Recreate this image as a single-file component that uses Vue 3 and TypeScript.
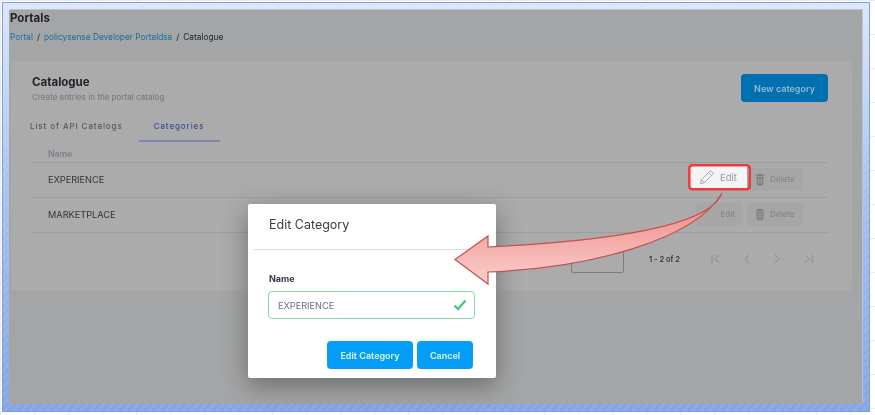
<script setup lang="ts">
interface Row { name: string; highlighted: boolean }
const rows: Row[] = [
  { name: 'EXPERIENCE', highlighted: true },
  { name: 'MARKETPLACE', highlighted: false },
]
</script>

<template>
  <div class="screen">
    <div class="frame">
      <main class="page">
        <h1 class="page-title">Portals</h1>
        <nav class="crumbs">
          <a>Portal</a><span class="sep">/</span><a>policysense Developer Portaldsa</a><span class="sep">/</span><span>Catalogue</span>
        </nav>
        <section class="card">
          <header class="card-head">
            <div>
              <h2>Catalogue</h2>
              <p>Create entries in the portal catalog</p>
            </div>
            <button class="new-btn">New category</button>
          </header>
          <div class="tabs">
            <span class="tab">List of API Catalogs</span>
            <span class="tab active">Categories</span>
          </div>
          <div class="table">
            <div class="th">Name</div>
            <div v-for="row in rows" :key="row.name" class="tr">
              <span class="cell-name">{{ row.name }}</span>
              <div class="actions">
                <button class="act edit" :class="{ hot: row.highlighted }">
                  <svg class="pencil" viewBox="0 0 16 16" fill="none" stroke="currentColor" stroke-width="1">
                    <path d="M1.5 14.5l1-4.2L11.6 1.2a1 1 0 0 1 1.4 0l1.8 1.8a1 1 0 0 1 0 1.4L5.700 13.500z" />
                    <path d="M2.500 10.300l3.200 3.200M10.200 2.600l3.200 3.200" />
                  </svg>
                  Edit
                </button>
                <button class="act del">
                  <svg class="trash" viewBox="0 0 14 16" fill="currentColor">
                    <path d="M5 0h4l.6 1.500H13V3H1V1.500h3.400zM2 4h10l-.7 12H2.700zM4.500 6l.3 8h1L5.500 6zM6.500 6v8h1V6zM8.500 6l-.3 8h1l.3-8z" fill-rule="evenodd" />
                  </svg>
                  Delete
                </button>
              </div>
            </div>
          </div>
          <footer class="pager">
            <div class="size-box"></div>
            <span class="range">1 - 2 of 2</span>
            <div class="pager-icons">
              <svg viewBox="0 0 12 12"><path d="M2 2v8M9 2L5 6l4 4" /></svg>
              <svg viewBox="0 0 12 12"><path d="M8 2L4 6l4 4" /></svg>
              <svg viewBox="0 0 12 12"><path d="M4 2l4 4-4 4" /></svg>
              <svg viewBox="0 0 12 12"><path d="M3 2l4 4-4 4M10 2v8" /></svg>
            </div>
          </footer>
        </section>
      </main>
    </div>

    <div class="modal">
      <div class="modal-head">Edit Category</div>
      <div class="modal-body">
        <label class="field-label">Name</label>
        <div class="input">
          <span>EXPERIENCE</span>
          <svg class="check" viewBox="0 0 14 12" fill="none"><path d="M1.500 6.500l3.500 3.500 7.500-8.500" /></svg>
        </div>
        <div class="modal-actions">
          <button class="primary edit-cat">Edit Category</button>
          <button class="primary cancel">Cancel</button>
        </div>
      </div>
    </div>

    <svg class="annotation" viewBox="0 0 875 415" width="875" height="415">
      <defs>
        <linearGradient id="arrowFill" x1="0" y1="0" x2="0" y2="1">
          <stop offset="0" stop-color="#ef8580" />
          <stop offset="1" stop-color="#f9cfcd" />
        </linearGradient>
      </defs>
      <rect x="689.300" y="165.300" width="60.500" height="24" rx="3" fill="none" stroke="#f03a3a" stroke-width="2.500" />
      <path d="M722 193C712 222 630 240 488 247L488 236L455 259.500L488 284L488 272C590 268 695 240 722 193Z" fill="url(#arrowFill)" stroke="#bd5450" stroke-width="1.200" stroke-linejoin="miter" />
    </svg>
  </div>
</template>

<style>
html, body { margin: 0; padding: 0; background: #fff; }
</style>

<style scoped>
.screen {
  position: relative;
  width: 875px;
  height: 415px;
  overflow: hidden;
  background-color: #fff;
  background-image:
    linear-gradient(#e9ecf1 1px, transparent 1px),
    linear-gradient(90deg, #e9ecf1 1px, transparent 1px);
  background-size: 34px 34px;
  padding: 2px 5px 3px 2px;
  box-sizing: border-box;
  font-family: Inter, "Liberation Sans", sans-serif;
}
.frame {
  height: 100%;
  box-sizing: border-box;
  padding: 7px 7px 7px 6px;
  border: 1px solid #7f9ed6;
  background:
    repeating-linear-gradient(135deg, rgba(255, 255, 255, 0.07) 0 3px, transparent 3px 6px),
    linear-gradient(#dbe7fa, #a9c3f0 45%, #84a5e3);
}
.page {
  height: 100%;
  box-sizing: border-box;
  background: #a4a5a6;
  padding: 1px 10px 0 1px;
  color: #1f2127;
  box-shadow: 1px -1px 0 #bcc3cf;
  filter: blur(0.35px);
}
.page-title { margin: 0; font-size: 11.500px; line-height: 14px; font-weight: 700; }
.crumbs { margin-top: 6px; font-size: 8.300px; line-height: 12px; display: flex; color: #23252b; }
.crumbs a { color: #1d6f9e; }
.sep { margin: 0 4px; }
.card {
  margin-top: 18px;
  margin-left: 1px;
  height: 230px;
  box-sizing: border-box;
  background: #ababab;
  border-radius: 5px;
  padding: 13px 24px 0 20px;
}
.card-head { display: flex; justify-content: space-between; padding-left: 2px; margin-left: -1px; }
.card-head h2 { margin: 1px 0 0; font-size: 11.500px; line-height: 14px; font-weight: 700; color: #21232b; }
.card-head p { margin: 3px 0 0; font-size: 8px; line-height: 10px; font-weight: 500; color: #7a7b82; }
.new-btn {
  width: 87px; height: 28px; border: 0; border-radius: 4px;
  background: #0070b0; color: #8fb9d2;
  font: 600 9px Inter, "Liberation Sans", sans-serif;
}
.tabs { display: flex; margin-top: 12px; height: 28px; margin-left: -1px; }
.tab { font-size: 8px; line-height: 24px; letter-spacing: 0.9px; font-weight: 500; color: #55575c; padding: 0 8px 0 0; }
.tab.active {
  color: #3e4a8f; margin-left: 8px; padding: 0 16px 0 15px;
  border-bottom: 2px solid #7c84b6; height: 26px; box-sizing: content-box;
}
.table { padding-left: 0; margin-top: 6px; }
.th {
  font-size: 8.600px; font-weight: 600; color: #7c7d8e; padding-left: 17px;
  line-height: 12px; padding-bottom: 2px; border-bottom: 1px solid #9d9e9f;
}
.tr {
  display: flex; align-items: center; justify-content: space-between;
  height: 32px; box-sizing: content-box;
  padding: 0 25px 2px 17px; border-bottom: 1px solid #9d9e9f;
}
.cell-name { font-size: 9.200px; font-weight: 400; color: #33343a; }
.actions { display: flex; gap: 5px; width: 107px; justify-content: flex-end; }
.act {
  display: flex; align-items: center; justify-content: center; gap: 5px; flex: none;
  height: 23px; border: 0; border-radius: 4px; padding: 0;
  background: #a6a6a7; color: #85878c;
  font: 500 8px Inter, "Liberation Sans", sans-serif;
}
.edit { width: 46px; justify-content: flex-end; padding-right: 7px; box-sizing: border-box; }
.del { width: 56px; }
.edit .pencil { display: none; }
.edit.hot {
  width: 58px; margin: -2px -6px 2px 0; justify-content: center; gap: 6px; padding: 0 2px 0 0;
  background: #f4f4f5; color: #96979e; font-size: 9.500px; font-weight: 400;
  border-radius: 0;
  box-shadow: inset -1px -1px 0 #9a9a9c;
}
.edit.hot .pencil { display: block; width: 15px; height: 15px; color: #a2a3ad; }
.trash { width: 10px; height: 13px; color: #7d7f83; }
.pager { display: flex; align-items: center; margin-top: 12px; padding-left: 540px; }
.size-box { width: 51px; height: 26px; border: 1px solid #7d7e80; border-radius: 2px; }
.range { margin-left: 25px; width: 60px; font-size: 7.500px; font-weight: 600; color: #33353a; white-space: nowrap; }
.pager-icons { display: flex; gap: 18.700px; margin-left: 1px; }
.pager-icons svg { width: 12px; height: 12px; fill: none; stroke: #8d8e91; stroke-width: 1; }

.modal {
  position: absolute;
  left: 248px; top: 204px;
  width: 248px; height: 174px;
  background: #fff; border-radius: 2px;
  box-shadow: 0 8px 26px rgba(40, 40, 40, 0.45);
  box-sizing: border-box;
  padding: 0 21px 0 20px;
  color: #35373d;
  filter: blur(0.3px);
}
.modal-head {
  margin: 0 -14px; padding: 12px 15px 0; height: 33px;
  font-size: 12.500px; line-height: 18px; color: #3a3c42;
  border-bottom: 1px solid #dcdddf;
}
.modal-body { padding-top: 23px; }
.field-label { display: block; padding-left: 1px; font-size: 9px; line-height: 12px; font-weight: 700; color: #363a48; }
.input {
  margin-top: 6px; height: 28px; box-sizing: border-box;
  border: 1px solid #87dba9; border-radius: 4px;
  display: flex; align-items: center; justify-content: space-between;
  padding: 0 7px 0 9px;
  font-size: 9.200px; color: #6c6e80;
}
.check { width: 14px; height: 12px; stroke: #4ec77f; stroke-width: 2.400; }
.modal-actions { display: flex; justify-content: flex-end; gap: 4px; margin-top: 22px; padding-right: 2px; }
.primary {
  height: 28px; border: 0; border-radius: 4px; background: #049ef9; color: #dff2fd;
  font: 600 9px Inter, "Liberation Sans", sans-serif; padding: 0;
}
.edit-cat { width: 86px; }
.cancel { width: 56px; }
.annotation { position: absolute; left: 0; top: 0; pointer-events: none; }
</style>
